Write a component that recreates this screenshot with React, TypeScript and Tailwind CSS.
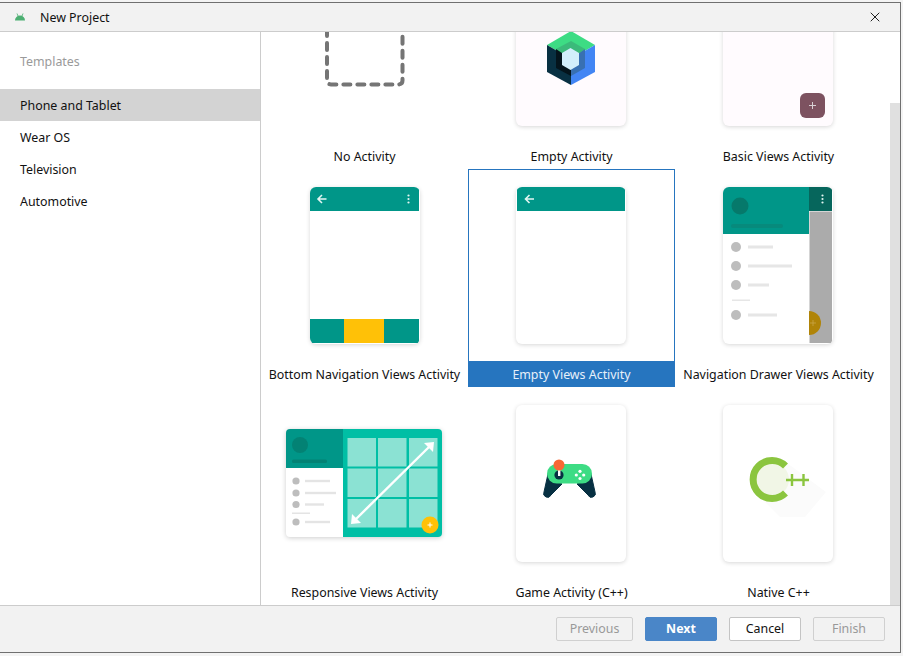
import { X } from "lucide-react";
import type { ReactNode } from "react";

const font = "font-['Noto_Sans','Open_Sans',sans-serif]";

function PhoneCard({ tint, children }: { tint?: boolean; children?: ReactNode }) {
  return (
    <div
      className={`h-[157px] w-[110px] shrink-0 overflow-hidden rounded-[6px] shadow-[0_1px_4px_rgba(0,0,0,0.16)] ${tint ? "bg-[#fffbfe]" : "bg-white"}`}
    >
      {children}
    </div>
  );
}

function BackArrow({ x }: { x: number }) {
  return (
    <path
      d={`M${x + 9.5} 12H${x + 1} M${x + 5} 8L${x + 1} 12L${x + 5} 16`}
      stroke="#e3f5f2"
      strokeWidth="1.6"
      fill="none"
    />
  );
}

function Dots({ x, y }: { x: number; y: number }) {
  return (
    <g fill="#e3f5f2">
      <circle cx={x} cy={y - 3.5} r="1.1" />
      <circle cx={x} cy={y} r="1.1" />
      <circle cx={x} cy={y + 3.5} r="1.1" />
    </g>
  );
}

function NoActivityArt() {
  return (
    <div className="h-[157px] w-[110px] shrink-0">
      <svg width="110" height="157" viewBox="0 0 110 157">
        <path
          d="M17 32V111.5a4 4 0 0 0 4 4H88.5a4 4 0 0 0 4-4V32"
          fill="none"
          stroke="#757575"
          strokeWidth="4"
          strokeLinecap="round"
          strokeDasharray="7 7"
        />
      </svg>
    </div>
  );
}

function ComposeArt() {
  return (
    <svg width="110" height="157" viewBox="516 -31 110 157">
      <polygon points="571,31 595,45 571,59 547,45" fill="#3ddc84" />
      <polygon points="547,45 571,59 571,85 547,72" fill="#083042" />
      <polygon points="595,45 595,72 571,85 571,59" fill="#4285f4" />
      <polygon points="571,41 585,49 571,59 556,49" fill="#3bba7a" />
      <polygon points="556,49 571,59 571,76 556,68" fill="#04141c" />
      <polygon points="585,49 585,68 571,76 571,59" fill="#3870b2" />
      <polygon points="570.5,48 579,53 579,65 570.5,70 562,65 562,53" fill="#d2eefb" />
    </svg>
  );
}

function BasicViewsArt() {
  return (
    <svg width="110" height="157" viewBox="723 -31 110 157">
      <rect x="800" y="93" width="25" height="25" rx="6" fill="#7d5260" />
      <path d="M812.5 102V109 M809 105.5H816" stroke="#d8d0d4" strokeWidth="1" />
    </svg>
  );
}

function BottomNavArt() {
  return (
    <svg width="110" height="157" viewBox="0 0 110 157">
      <rect x="0" y="0" width="109" height="24" fill="#009688" />
      <BackArrow x={7} />
      <Dots x={98.5} y={12} />
      <rect x="0" y="132" width="109" height="24" fill="#009688" />
      <rect x="34" y="132" width="40" height="24" fill="#ffc107" />
    </svg>
  );
}

function EmptyViewsArt() {
  return (
    <svg width="110" height="157" viewBox="0 0 110 157">
      <rect x="1" y="0" width="108" height="24" fill="#009688" />
      <BackArrow x={8.5} />
    </svg>
  );
}

function NavDrawerArt() {
  const rows = [
    { y: 247, end: 773 },
    { y: 266, end: 792 },
    { y: 285, end: 769 },
    { y: 315, end: 777 },
  ];
  return (
    <svg width="110" height="157" viewBox="723 187 110 157">
      <rect x="723" y="187" width="86" height="47" fill="#009688" />
      <rect x="809" y="187" width="23" height="24" fill="#06665c" />
      <rect x="809.5" y="211.5" width="22.5" height="131.5" fill="#ababab" />
      <Dots x={822.5} y={199} />
      <circle cx="740" cy="206" r="8.5" fill="#06796b" />
      <rect x="731" y="224" width="52" height="4" rx="2" fill="#078a7c" />
      <path d="M809 311a12 12 0 0 1 0 24z" fill="#b08408" />
      <path d="M813 320V326M810 323H816" stroke="#c9a64a" strokeWidth="0.8" />
      {rows.map((row) => (
        <g key={row.y}>
          <circle cx="736" cy={row.y} r="5" fill="#bdbdbd" />
          <rect x="748" y={row.y - 1.5} width={row.end - 748} height="3" fill="#e6e6e6" />
        </g>
      ))}
      <rect x="732" y="299.5" width="18" height="1.5" fill="#e6e6e6" />
    </svg>
  );
}

function ResponsiveArt() {
  const cells = [438, 468.5, 499];
  const rows = [
    { y: 481, end: 330 },
    { y: 493, end: 336 },
    { y: 504.5, end: 324 },
    { y: 522, end: 330 },
  ];
  return (
    <div className="h-[108px] w-[156px] shrink-0 overflow-hidden rounded-[4px] bg-white shadow-[0_1px_5px_rgba(0,0,0,0.2)]">
      <svg width="156" height="108" viewBox="286 429 156 108">
        <rect x="343" y="429" width="99" height="108" fill="#00bfa5" />
        <rect x="286" y="429" width="57" height="39" fill="#009688" />
        <circle cx="300" cy="445" r="8" fill="#038274" />
        <rect x="292" y="459.5" width="35" height="3.5" rx="1.5" fill="#038274" />
        {cells.map((y) =>
          [347.5, 378, 409].map((x) => (
            <rect key={`${x}-${y}`} x={x} y={y} width="28.5" height="28.5" fill="#8be2d3" />
          ))
        )}
        <path d="M354 521L431 445" stroke="white" strokeWidth="2.4" />
        <polygon points="351,524 352,514 361,523" fill="white" />
        <polygon points="434,442 433,452 424,443" fill="white" />
        <circle cx="430" cy="525" r="8.5" fill="#ffc107" />
        <path d="M430 522.5V527.5M427.5 525H432.5" stroke="white" strokeWidth="1" />
        {rows.map((row) => (
          <g key={row.y}>
            <circle cx="296" cy={row.y} r="3.6" fill="#bdbdbd" />
            <rect x="305" y={row.y - 1.2} width={row.end - 305} height="2.4" fill="#e4e4e4" />
          </g>
        ))}
        <rect x="292" y="512.5" width="18" height="1.5" fill="#e4e4e4" />
      </svg>
    </div>
  );
}

function GameArt() {
  return (
    <svg width="110" height="157" viewBox="516 405 110 157">
      <path
        d="M548 474L544 492a3.5 3.5 0 0 0 7 3L562 484L555 480Z M591 474L595 492a3.5 3.5 0 0 1-7 3L577 484L584 480Z"
        fill="#073042"
        stroke="#073042"
        strokeLinejoin="round"
      />
      <rect x="547" y="464" width="45" height="19.5" rx="9.7" fill="#3ddc84" />
      <circle cx="559" cy="475" r="4.6" fill="#073042" />
      <rect x="558" y="467" width="2.4" height="9" fill="white" />
      <circle cx="559" cy="465" r="5.5" fill="#f86734" />
      <g fill="white">
        <circle cx="580" cy="471.3" r="1.6" />
        <circle cx="580" cy="478.5" r="1.6" />
        <circle cx="576.3" cy="475" r="1.6" />
        <circle cx="583.7" cy="475" r="1.6" />
      </g>
    </svg>
  );
}

function CppArt() {
  return (
    <svg width="110" height="157" viewBox="723 405 110 157">
      <polygon points="757,494 787,463 826,492 805,517 780,517" fill="#fbfbfb" />
      <circle cx="772" cy="479.5" r="17" fill="#f1f6e6" />
      <path d="M785.5 466A19 19 0 1 0 785.5 493" fill="none" stroke="#8bc53f" strokeWidth="7" />
      <path d="M786 480H798 M792 474V486 M798 480H809 M803.5 474V486" stroke="#8bc53f" strokeWidth="2.4" />
    </svg>
  );
}

const templates: { name: string; art: ReactNode; selected?: boolean; nudge?: string }[] = [
  { name: "No Activity", art: <NoActivityArt /> },
  { name: "Empty Activity", art: <PhoneCard tint><ComposeArt /></PhoneCard>, nudge: "pr-px" },
  { name: "Basic Views Activity", art: <PhoneCard tint><BasicViewsArt /></PhoneCard>, nudge: "pr-px" },
  { name: "Bottom Navigation Views Activity", art: <PhoneCard><BottomNavArt /></PhoneCard> },
  { name: "Empty Views Activity", art: <PhoneCard><EmptyViewsArt /></PhoneCard>, selected: true, nudge: "pr-px" },
  { name: "Navigation Drawer Views Activity", art: <PhoneCard><NavDrawerArt /></PhoneCard>, nudge: "pr-px" },
  { name: "Responsive Views Activity", art: <ResponsiveArt />, nudge: "pr-px pb-px" },
  { name: "Game Activity (C++)", art: <PhoneCard><GameArt /></PhoneCard>, nudge: "pr-px" },
  { name: "Native C++", art: <PhoneCard><CppArt /></PhoneCard>, nudge: "pr-px" },
];

const formFactors = ["Phone and Tablet", "Wear OS", "Television", "Automotive"];

function FooterButton({ label, kind }: { label: string; kind: "disabled" | "primary" | "plain" }) {
  const styles = {
    disabled: "border-[#d0d0d0] text-[#999999]",
    primary: "border-[#4a86c8] bg-[#4a86c8] font-bold text-white",
    plain: "border-[#c4c4c4] bg-white text-[#111111]",
  };
  return (
    <button
      className={`flex h-6 items-center justify-center rounded-[2px] border pt-px ${label === "Previous" ? "w-[77px]" : "w-[72px]"} ${styles[kind]}`}
    >
      {label}
    </button>
  );
}

export default function App() {
  return (
    <div className={`h-[656px] w-[903px] overflow-hidden bg-[#f4f4f4] pt-[2px] text-[12.4px] text-[#111111] ${font}`}>
      <div className="flex h-[651px] w-[901px] flex-col border-y border-r border-[#707070] bg-white">
        {/* title bar */}
        <div className="flex h-[29px] shrink-0 items-center border-b border-[#cccccc] bg-[#f2f2f2]">
          <svg className="ml-[15px]" width="10" height="8" viewBox="0 0 10 8">
            <path d="M0 7.5a5 5 0 0 1 10 0Z" fill="#4caf72" />
            <path d="M2 0.5L3 3M8 0.5L7 3" stroke="#4caf72" strokeWidth="0.8" />
          </svg>
          <span className="ml-[15px] pt-[2px]">New Project</span>
          <X className="ml-auto mr-[17px] text-[#111111]" size={16} strokeWidth={1.4} />
        </div>

        <div className="flex h-[573px] shrink-0">
          {/* sidebar */}
          <div className="w-[261px] shrink-0 border-r border-[#cccccc] pt-[13px]">
            <div className="mb-3 flex h-8 items-center pl-5 pt-[2px] text-[#9a9a9a]">Templates</div>
            {formFactors.map((item, i) => (
              <div key={item} className={`flex h-8 items-center pl-5 pt-[2px] ${i === 0 ? "bg-[#d3d3d3]" : ""}`}>
                {item}
              </div>
            ))}
          </div>

          {/* template grid */}
          <div className="w-[621px] shrink-0 overflow-hidden">
            <div className="-mt-[81px] grid grid-cols-[repeat(3,207px)] auto-rows-[218px]">
              {templates.map((t) => (
                <div
                  key={t.name}
                  className={`flex flex-col items-center border ${t.selected ? "border-[#2675bf]" : "border-transparent"}`}
                >
                  <div className={`mt-[17px] flex h-[157px] w-[156px] items-center justify-center ${t.nudge ?? ""}`}>{t.art}</div>
                  <div
                    className={`mt-[17px] flex h-[25px] w-full items-center justify-center whitespace-nowrap pt-[4px] ${t.selected ? "bg-[#2675bf] text-[#e6f0fa]" : ""}`}
                  >
                    {t.name}
                  </div>
                </div>
              ))}
            </div>
          </div>

          {/* scrollbar */}
          <div className="ml-2 w-[10px] shrink-0 pt-[71px]">
            <div className="h-full bg-[#e0e0e0]" />
          </div>
        </div>

        {/* footer */}
        <div className="flex h-[47px] shrink-0 items-center justify-end gap-3 border-t border-[#cccccc] bg-[#f2f2f2] pr-[15px]">
          <FooterButton label="Previous" kind="disabled" />
          <FooterButton label="Next" kind="primary" />
          <FooterButton label="Cancel" kind="plain" />
          <FooterButton label="Finish" kind="disabled" />
        </div>
      </div>
    </div>
  );
}
